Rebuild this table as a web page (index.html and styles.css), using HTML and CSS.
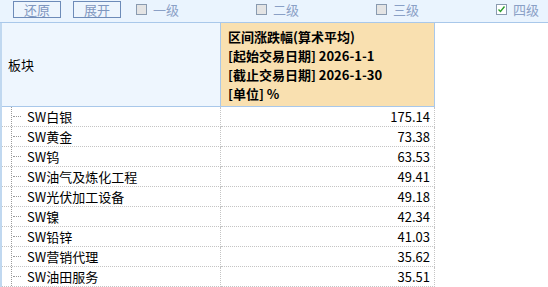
FILE: index.html
```html
<!DOCTYPE html>
<html>
<head>
<meta charset="utf-8">
<link rel="stylesheet" href="styles.css">
</head>
<body>
<div class="toolbar">
  <button class="btn">还原</button>
  <button class="btn">展开</button>
  <label class="chk l1"><span class="box"></span>一级</label>
  <label class="chk"><span class="box"></span>二级</label>
  <label class="chk"><span class="box"></span>三级</label>
  <label class="chk last"><span class="box checked"><svg width="9" height="9" viewBox="0 0 9 9"><path d="M1.5 4.5 L3.5 6.5 L7.5 1.5" fill="none" stroke="#2a9d2a" stroke-width="1.4"/></svg></span>四级</label>
</div>
<div class="grid">
  <div class="head name">板块</div>
  <div class="head metric">
    <div>区间涨跌幅(算术平均)</div>
    <div>[起始交易日期] 2026-1-1</div>
    <div>[截止交易日期] 2026-1-30</div>
    <div>[单位] %</div>
  </div>
  <div class="cell name"><span class="stub"></span>SW白银</div><div class="cell num">175.14</div>
  <div class="cell name"><span class="stub"></span>SW黄金</div><div class="cell num">73.38</div>
  <div class="cell name"><span class="stub"></span>SW钨</div><div class="cell num">63.53</div>
  <div class="cell name"><span class="stub"></span>SW油气及炼化工程</div><div class="cell num">49.41</div>
  <div class="cell name"><span class="stub"></span>SW光伏加工设备</div><div class="cell num">49.18</div>
  <div class="cell name"><span class="stub"></span>SW镍</div><div class="cell num">42.34</div>
  <div class="cell name"><span class="stub"></span>SW铅锌</div><div class="cell num">41.03</div>
  <div class="cell name"><span class="stub"></span>SW营销代理</div><div class="cell num">35.62</div>
  <div class="cell name"><span class="stub"></span>SW油田服务</div><div class="cell num">35.51</div>
</div>
</body>
</html>
```
FILE: styles.css
```css
* { box-sizing: border-box; }
body {
  margin: 0;
  width: 548px;
  height: 287px;
  overflow: hidden;
  background: #fff;
  font-family: "Noto Sans CJK SC", "Noto Sans", sans-serif;
  font-size: 13px;
  color: #000;
}
.toolbar {
  height: 23px;
  background: #eaf4fe;
  border-bottom: 1px solid #a9c8ea;
  display: flex;
  align-items: center;
  padding-left: 13px;
}
.btn {
  flex-shrink: 0;
  font: inherit;
  font-size: 13px;
  color: #7f97bf;
  background: #edf5fd;
  border: 1px solid #6d8bb8;
  width: 48px;
  height: 17px;
  padding: 0;
  line-height: 15px;
  margin-right: 12px;
  margin-top: -4px;
}
.chk {
  flex-shrink: 0;
  display: flex;
  align-items: center;
  color: #8aa0c6;
  width: 120px;
  margin-top: -4px;
}
.chk.l1 { margin-left: 3px; }
.chk.last { width: auto; }
.box {
  width: 11px;
  height: 11px;
  border: 1px solid #8a9bb0;
  background: #e4e4e4;
  margin-right: 6px;
  display: flex;
  align-items: center;
  justify-content: center;
}
.box.checked { background: #fff; }
.grid {
  display: grid;
  grid-template-columns: 219px 214px;
  grid-template-rows: 84px;
  grid-auto-rows: 20px;
  border-left: 2px solid #c0d8f0;
  width: 433px;
}
.head {
  border-bottom: 1px solid #a9c8ea;
}
.head.name {
  background: #eef6fe;
  border-right: 1px solid #a9c8ea;
  display: flex;
  align-items: center;
  padding-left: 6px;
}
.head.metric {
  background: #f9e0b0;
  border-right: 1px solid #a9c8ea;
  font-weight: bold;
  padding: 4px 0 0 7px;
  line-height: 19px;
}
.cell {
  border-bottom: 1px dotted #c4c4c4;
  border-right: 1px dotted #c4c4c4;
  line-height: 19px;
  white-space: nowrap;
}
.cell.name {
  display: flex;
  align-items: center;
  padding-left: 9px;
}
.stub {
  width: 16px;
  border-left: 1px dotted #9a9a9a;
  position: relative;
  align-self: stretch;
}
.stub::after {
  content: "";
  position: absolute;
  left: 1px;
  top: 9px;
  width: 8px;
  border-top: 1px dotted #9a9a9a;
}
.cell.num {
  text-align: right;
  padding-right: 4px;
}
```
